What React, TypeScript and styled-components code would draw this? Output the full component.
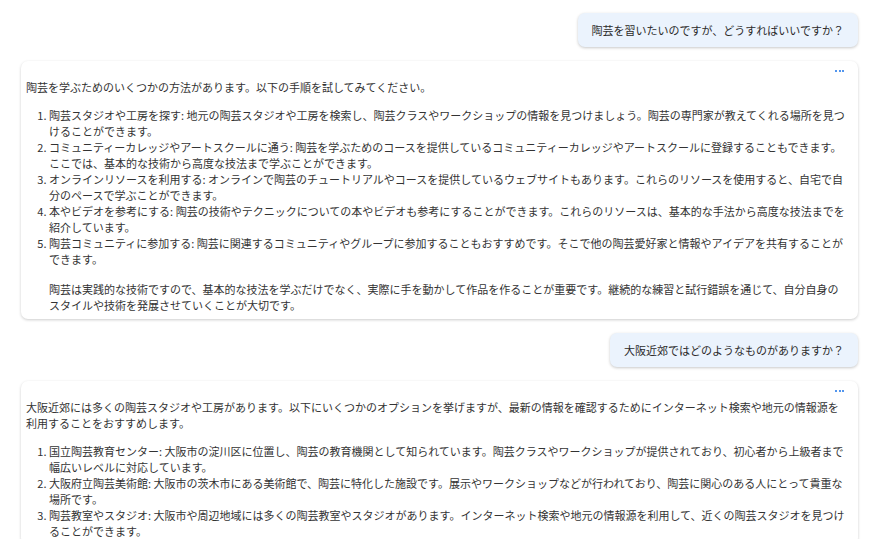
import React, { FC } from 'react';
import styled, { createGlobalStyle } from 'styled-components';

const GlobalStyle = createGlobalStyle`
    html, body {
        margin: 0;
        padding: 0;
        background: #ffffff;
    }
    body {
        font-family: 'Noto Sans CJK JP', 'Noto Sans', sans-serif;
        font-size: 11px;
        color: #333333;
    }
`;

type Answer = {
    intro: string;
    items: { title: string; body: string }[];
    outro?: string;
};

type Turn = {
    question: string;
    answer: Answer;
};

const turns: Turn[] = [
    {
        question: '陶芸を習いたいのですが、どうすればいいですか？',
        answer: {
            intro: '陶芸を学ぶためのいくつかの方法があります。以下の手順を試してみてください。',
            items: [
                {
                    title: '陶芸スタジオや工房を探す',
                    body: '地元の陶芸スタジオや工房を検索し、陶芸クラスやワークショップの情報を見つけましょう。陶芸の専門家が教えてくれる場所を見つけることができます。',
                },
                {
                    title: 'コミュニティーカレッジやアートスクールに通う',
                    body: '陶芸を学ぶためのコースを提供しているコミュニティーカレッジやアートスクールに登録することもできます。ここでは、基本的な技術から高度な技法まで学ぶことができます。',
                },
                {
                    title: 'オンラインリソースを利用する',
                    body: 'オンラインで陶芸のチュートリアルやコースを提供しているウェブサイトもあります。これらのリソースを使用すると、自宅で自分のペースで学ぶことができます。',
                },
                {
                    title: '本やビデオを参考にする',
                    body: '陶芸の技術やテクニックについての本やビデオも参考にすることができます。これらのリソースは、基本的な手法から高度な技法までを紹介しています。',
                },
                {
                    title: '陶芸コミュニティに参加する',
                    body: '陶芸に関連するコミュニティやグループに参加することもおすすめです。そこで他の陶芸愛好家と情報やアイデアを共有することができます。',
                },
            ],
            outro: '陶芸は実践的な技術ですので、基本的な技法を学ぶだけでなく、実際に手を動かして作品を作ることが重要です。継続的な練習と試行錯誤を通じて、自分自身のスタイルや技術を発展させていくことが大切です。',
        },
    },
    {
        question: '大阪近郊ではどのようなものがありますか？',
        answer: {
            intro: '大阪近郊には多くの陶芸スタジオや工房があります。以下にいくつかのオプションを挙げますが、最新の情報を確認するためにインターネット検索や地元の情報源を利用することをおすすめします。',
            items: [
                {
                    title: '国立陶芸教育センター',
                    body: '大阪市の淀川区に位置し、陶芸の教育機関として知られています。陶芸クラスやワークショップが提供されており、初心者から上級者まで幅広いレベルに対応しています。',
                },
                {
                    title: '大阪府立陶芸美術館',
                    body: '大阪市の茨木市にある美術館で、陶芸に特化した施設です。展示やワークショップなどが行われており、陶芸に関心のある人にとって貴重な場所です。',
                },
                {
                    title: '陶芸教室やスタジオ',
                    body: '大阪市や周辺地域には多くの陶芸教室やスタジオがあります。インターネット検索や地元の情報源を利用して、近くの陶芸スタジオを見つけることができます。',
                },
            ],
        },
    },
];

const AnswerCard: FC<{ answer: Answer }> = ({ answer }) => {
    const last = answer.items.length - 1;
    return (
        <Card>
            <MenuRow>
                <Dots aria-label="more">
                    <Dot />
                    <Dot />
                    <Dot />
                </Dots>
            </MenuRow>
            <Intro>{answer.intro}</Intro>
            <List>
                {answer.items.map((item, i) => (
                    <Item key={item.title}>
                        {`${item.title}: ${item.body}`}
                        {i === last && answer.outro && <Outro>{answer.outro}</Outro>}
                    </Item>
                ))}
            </List>
        </Card>
    );
};

export default function App() {
    return (
        <>
            <GlobalStyle />
            <Thread>
                {turns.map((turn) => (
                    <React.Fragment key={turn.question}>
                        <QuestionRow>
                            <Bubble>{turn.question}</Bubble>
                        </QuestionRow>
                        <AnswerCard answer={turn.answer} />
                    </React.Fragment>
                ))}
            </Thread>
        </>
    );
}

const Thread = styled.div`
    display: flex;
    flex-direction: column;
    gap: 14px;
    padding: 13px 22px 20px 21px;
`;

const QuestionRow = styled.div`
    display: flex;
    justify-content: flex-end;
`;

const Bubble = styled.div`
    background: #ebf3fd;
    border-radius: 7px;
    box-shadow: 0 1px 3px rgba(0, 0, 0, 0.22);
    padding: 9px 14px;
    line-height: 16px;
    color: #2b2b2b;
`;

const Card = styled.div`
    background: #ffffff;
    border-radius: 7px;
    box-shadow: 0 1px 3px rgba(0, 0, 0, 0.2);
    padding: 4px 9px 6px 5px;
    line-height: 16px;
`;

const MenuRow = styled.div`
    display: flex;
    justify-content: flex-end;
    align-items: center;
    height: 14px;
    padding-right: 5px;
`;

const Dots = styled.span`
    display: flex;
    gap: 1.5px;
    margin-top: -3px;
`;

const Dot = styled.span`
    width: 2px;
    height: 2px;
    border-radius: 50%;
    background: #1a73e8;
`;

const Intro = styled.p`
    margin: 0;
`;

const List = styled.ol`
    margin: 12px 0 0;
    padding-left: 23px;
`;

const Item = styled.li`
    padding-left: 0;
`;

const Outro = styled.p`
    margin: 14px 0 0;
`;
